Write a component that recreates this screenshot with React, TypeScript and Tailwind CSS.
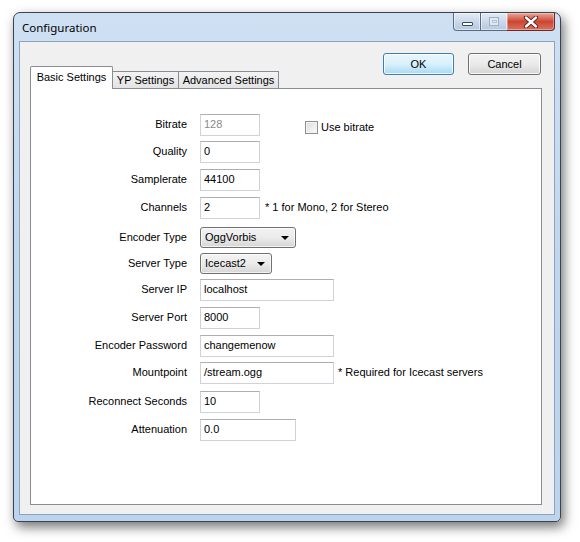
import React from "react";

type Row = {
  label: string;
  rowH: string;
  kind: "text" | "combo";
  w: string;
  value: string;
  disabled?: boolean;
  note?: string;
  noteMl?: string;
  checkbox?: boolean;
};

const rows: Row[] = [
  { label: "Bitrate", rowH: "h-[27px]", kind: "text", w: "w-[60px]", value: "128", disabled: true, checkbox: true },
  { label: "Quality", rowH: "h-[28px]", kind: "text", w: "w-[60px]", value: "0" },
  { label: "Samplerate", rowH: "h-[28px]", kind: "text", w: "w-[60px]", value: "44100" },
  { label: "Channels", rowH: "h-[30px]", kind: "text", w: "w-[60px]", value: "2", note: "* 1 for Mono, 2 for Stereo", noteMl: "ml-[5px]" },
  { label: "Encoder Type", rowH: "h-[26px]", kind: "combo", w: "w-[96px]", value: "OggVorbis" },
  { label: "Server Type", rowH: "h-[26px]", kind: "combo", w: "w-[72px]", value: "Icecast2" },
  { label: "Server IP", rowH: "h-[28px]", kind: "text", w: "w-[134px]", value: "localhost" },
  { label: "Server Port", rowH: "h-[28px]", kind: "text", w: "w-[60px]", value: "8000" },
  { label: "Encoder Password", rowH: "h-[27px]", kind: "text", w: "w-[134px]", value: "changemenow" },
  { label: "Mountpoint", rowH: "h-[29px]", kind: "text", w: "w-[134px]", value: "/stream.ogg", note: "* Required for Icecast servers", noteMl: "ml-[4px]" },
  { label: "Reconnect Seconds", rowH: "h-[28px]", kind: "text", w: "w-[60px]", value: "10" },
  { label: "Attenuation", rowH: "h-[22px]", kind: "text", w: "w-[96px]", value: "0.0" },
];

function TextBox({ w, value, disabled }: { w: string; value: string; disabled?: boolean }) {
  return (
    <div
      className={`${w} h-[22px] bg-white border border-[#cfd2d8] border-t-[#acaeb4] flex items-center pl-[3px] pb-[2px] ${
        disabled ? "text-[#8a8a8a]" : "text-black"
      }`}
    >
      {value}
    </div>
  );
}

function Combo({ w, value }: { w: string; value: string }) {
  return (
    <div
      className={`${w} h-[21px] rounded-[3px] border border-[#707070] bg-gradient-to-b from-[#f3f3f3] via-[#ebebeb] to-[#d6d6d6] flex items-center pl-[4px] pr-[6px] shadow-[inset_0_0_0_1px_rgba(255,255,255,0.7)]`}
    >
      <span className="flex-1 pb-[1px]">{value}</span>
      <span className="w-0 h-0 border-l-[4px] border-r-[4px] border-t-[4px] border-l-transparent border-r-transparent border-t-black" />
    </div>
  );
}

function CaptionButtons() {
  return (
    <div className="flex self-start mr-[5px] h-[18px]">
      <div className="w-[28px] h-full rounded-bl-[4px] border border-t-0 border-[#5a6b80] bg-gradient-to-b from-[#e3ecf6] via-[#cbd9ea] to-[#b6c9df] flex items-center justify-center shadow-[inset_0_0_0_1px_rgba(255,255,255,0.5)]">
        <div className="w-[11px] h-[4px] mt-[4px] bg-white border border-[#394a5e] rounded-[1px]" />
      </div>
      <div className="w-[26px] h-full border-b border-[#5a6b80] bg-gradient-to-b from-[#e3ecf6] via-[#cbd9ea] to-[#b6c9df] flex items-center justify-center shadow-[inset_0_0_0_1px_rgba(255,255,255,0.5)]">
        <div className="w-[10px] h-[9px] border border-[#9fb0c4] bg-[#e0e8f2] flex items-center justify-center">
          <div className="w-[5px] h-[3px] border border-[#b4c2d2]" />
        </div>
      </div>
      <div className="w-[48px] h-full rounded-br-[4px] border border-t-0 border-l-0 border-[#6e2a22] bg-gradient-to-b from-[#eaa596] via-[#cc4533] to-[#d9705f] flex items-center justify-center shadow-[inset_0_0_0_1px_rgba(255,255,255,0.35)]">
        <svg width="16" height="12" viewBox="0 0 16 12">
          <path d="M3 1.5 L13 10.5 M13 1.5 L3 10.5" stroke="#4b1a14" strokeWidth="4.2" strokeLinecap="round" />
          <path d="M3 1.5 L13 10.5 M13 1.5 L3 10.5" stroke="#ffffff" strokeWidth="2.4" strokeLinecap="round" />
        </svg>
      </div>
    </div>
  );
}

export default function App() {
  return (
    <div className="w-[580px] h-[542px] bg-white pt-[12px] pl-[13px] overflow-hidden font-['Liberation_Sans',Arial,sans-serif] text-[11px] text-black">
      <div className="w-[548px] h-[510px] rounded-t-[7px] rounded-b-[5px] border border-[#3b4350] bg-gradient-to-b from-[#cfe0f3] via-[#c0d6ee] to-[#bcd4ee] shadow-[3px_5px_12px_rgba(0,0,0,0.55)] flex flex-col">
        {/* title bar */}
        <div className="h-[28px] flex shrink-0">
          <div className="flex-1 pl-[8px] pt-[6px] text-[11.5px] font-['Noto_Sans','Open_Sans',sans-serif] text-black">
            Configuration
          </div>
          <CaptionButtons />
        </div>
        {/* client area */}
        <div className="mx-[5px] h-[474px] border border-[#8da2bd] bg-[#f0f0f0] flex flex-col pt-[11px] pl-[10px] pr-[12px] pb-[9px]">
          {/* tab strip + buttons */}
          <div className="h-[35px] flex shrink-0">
            <div className="flex self-end items-end">
              <div className="relative z-10 w-[83px] h-[23px] -mb-[1px] bg-white border border-b-0 border-[#898c95] rounded-t-[2px] flex items-center justify-center pb-[1px]">
                Basic Settings
              </div>
              <div className="w-[66px] h-[17px] bg-gradient-to-b from-[#f3f3f3] to-[#e3e3e3] border-t border-r border-[#898c95] flex items-center justify-center">
                YP Settings
              </div>
              <div className="w-[100px] h-[17px] bg-gradient-to-b from-[#f3f3f3] to-[#e3e3e3] border-t border-r border-[#898c95] flex items-center justify-center">
                Advanced Settings
              </div>
            </div>
            <div className="ml-auto flex self-start gap-[14px] mr-[1px]">
              <div className="w-[71px] h-[22px] rounded-[3px] border border-[#3c7fb1] bg-gradient-to-b from-[#eaf6fd] via-[#d9f0fc] to-[#a7d9f5] flex items-center justify-center shadow-[inset_0_0_0_1px_rgba(255,255,255,0.8)]">
                OK
              </div>
              <div className="w-[73px] h-[22px] rounded-[3px] border border-[#707070] bg-gradient-to-b from-[#f2f2f2] via-[#ebebeb] to-[#d4d4d4] flex items-center justify-center shadow-[inset_0_0_0_1px_rgba(255,255,255,0.8)]">
                Cancel
              </div>
            </div>
          </div>
          {/* tab panel */}
          <div className="flex-1 bg-white border border-[#898c95] pt-[25px] flex flex-col">
            {rows.map((r) => (
              <div key={r.label} className={`${r.rowH} flex items-start shrink-0`}>
                <div className={`flex items-center ${r.kind === "combo" ? "h-[21px]" : "h-[22px]"}`}>
                  <div className="w-[156px] text-right pb-[1px]">{r.label}</div>
                  <div className="w-[13px]" />
                  {r.kind === "text" ? (
                    <TextBox w={r.w} value={r.value} disabled={r.disabled} />
                  ) : (
                    <Combo w={r.w} value={r.value} />
                  )}
                  {r.note && <div className={`${r.noteMl} pb-[1px]`}>{r.note}</div>}
                  {r.checkbox && (
                    <div className="ml-[45px] mt-[5px] flex items-center gap-[3px]">
                      <div className="w-[13px] h-[13px] border border-[#8f8f8f] bg-gradient-to-br from-[#dcdcdc] to-[#fbfbfb] shadow-[inset_0_0_0_1px_#f4f4f4]" />
                      <span className="pb-[1px]">Use bitrate</span>
                    </div>
                  )}
                </div>
              </div>
            ))}
          </div>
        </div>
      </div>
    </div>
  );
}
